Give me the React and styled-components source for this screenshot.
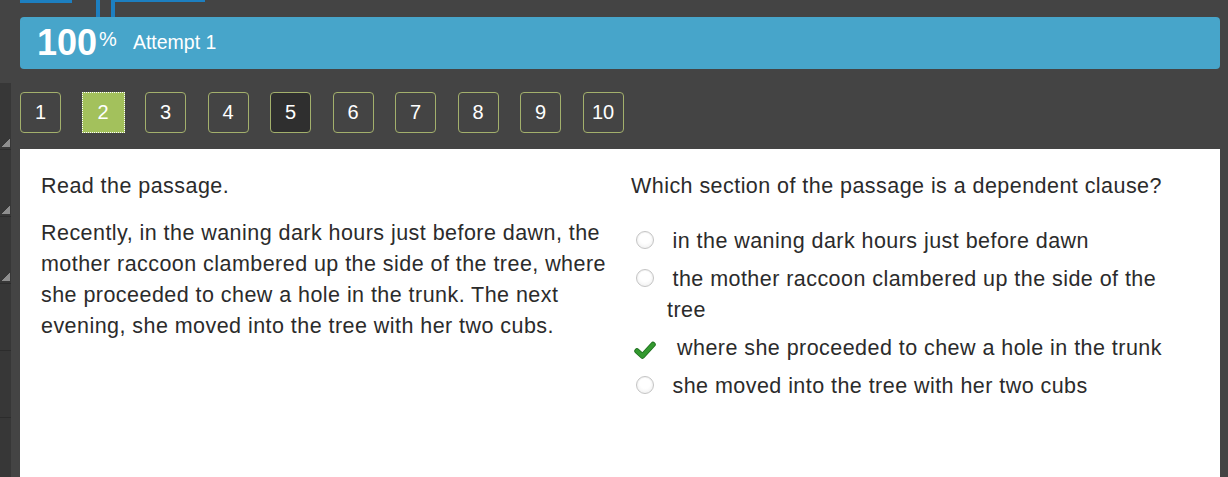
import React from "react";
import styled, { createGlobalStyle } from "styled-components";

const Global = createGlobalStyle`
  html, body { margin: 0; padding: 0; background: #444444; }
  body { font-family: "Liberation Sans", Arial, sans-serif; }
  * { box-sizing: border-box; }
`;

const Page = styled.div`
  min-height: 100vh;
  width: 1228px;
  display: flex;
  flex-direction: column;
  background: #444444;
  overflow: hidden;
`;

const TopStrip = styled.div`
  height: 17px;
  display: flex;
  align-items: flex-start;
`;

const TabPiece = styled.div`
  background: #1d7fc0;
  width: ${(p) => p.$w}px;
  height: ${(p) => p.$h}px;
  margin-left: ${(p) => p.$ml}px;
`;

const Header = styled.div`
  margin: 0 8px 0 20px;
  height: 52px;
  background: #47a5ca;
  border-radius: 4px;
  display: flex;
  align-items: center;
  padding-left: 17px;
  color: #fff;
`;

const Score = styled.div`
  display: inline-flex;
  align-items: flex-start;
`;

const ScoreNum = styled.span`
  font-size: 36px;
  line-height: 36px;
  font-weight: bold;
`;

const Percent = styled.span`
  font-size: 20px;
  line-height: 20px;
  margin-top: 4px;
  margin-left: 2px;
`;

const Attempt = styled.span`
  font-size: 19.5px;
  line-height: 19.5px;
  margin-left: 16px;
`;

const Body = styled.div`
  flex: 1;
  display: flex;
  margin-top: 14px;
`;

const Rail = styled.div`
  width: 11px;
  background: #373737;
  display: flex;
  flex-direction: column;
`;

const RailSegment = styled.div`
  height: 67px;
  flex: none;
  border-bottom: 1px solid #2c2c2c;
  display: flex;
  align-items: flex-end;
  justify-content: flex-end;
  padding: 0 1px 2px 0;
`;

const Grip = styled.div`
  width: 8px;
  height: 8px;
  background: linear-gradient(135deg, transparent 50%, #8e8e8e 50%);
`;

const Main = styled.div`
  flex: 1;
  margin: 0 8px 0 9px;
  display: flex;
  flex-direction: column;
`;

const Nav = styled.div`
  display: flex;
  gap: 21.5px;
  padding: 9px 0 16px;
`;

const NumButton = styled.div`
  width: ${(p) => (p.$active ? 43 : 41)}px;
  height: 41px;
  margin: 0 ${(p) => (p.$active ? -1 : 0)}px;
  border-radius: ${(p) => (p.$active ? 0 : 4)}px;
  border: 1px ${(p) => (p.$active ? "dotted #ffffff" : "solid #a3b06c")};
  background: ${(p) => (p.$active ? "#a3c15c" : p.$dark ? "#2f2f2f" : "#444444")};
  color: #fff;
  font-size: 20px;
  display: flex;
  align-items: center;
  justify-content: center;
`;

const Panel = styled.div`
  flex: 1;
  background: #fff;
  display: grid;
  grid-template-columns: 1fr 1fr;
  column-gap: 21px;
  padding: 22px 20px 0 21px;
  color: #2b2b2b;
  font-size: 21.5px;
  letter-spacing: 0.45px;
  line-height: 31px;
`;

const Column = styled.div`
  min-width: 0;
`;

const Para = styled.p`
  margin: 0 0 ${(p) => p.$mb || 0}px;
`;

const Options = styled.div`
  margin-top: 24px;
  display: flex;
  flex-direction: column;
  gap: 7px;
`;

const Option = styled.div`
  display: flex;
`;

const Marker = styled.div`
  width: 36px;
  flex: none;
  padding-left: ${(p) => (p.$check ? 3 : 5)}px;
  padding-top: ${(p) => (p.$check ? 8 : 4.5)}px;
  line-height: 0;
  svg { display: block; }
`;

const Radio = styled.div`
  width: 18px;
  height: 18px;
  border-radius: 50%;
  border: 1px solid #c4c4c4;
  background: radial-gradient(circle at 50% 40%, #ffffff 40%, #ececec 100%);
  box-shadow: inset 0 0 0 1px #f4f4f4;
`;

const OptionText = styled.div`
  text-indent: ${(p) => (p.$check ? 10 : 5.5)}px;
`;

const Check = () => (
  <svg width="22" height="18" viewBox="0 0 22 18">
    <path
      d="M3 10 L8.5 15 L19 3.5"
      fill="none"
      stroke="#1f6f1f"
      strokeWidth="5.5"
      strokeLinecap="round"
      strokeLinejoin="round"
    />
    <path
      d="M3 10 L8.5 15 L19 3.5"
      fill="none"
      stroke="#33992f"
      strokeWidth="3.8"
      strokeLinecap="round"
      strokeLinejoin="round"
    />
  </svg>
);

const numbers = [1, 2, 3, 4, 5, 6, 7, 8, 9, 10];

const options = [
  { text: "in the waning dark hours just before dawn" },
  { text: "the mother raccoon clambered up the side of the tree" },
  { text: "where she proceeded to chew a hole in the trunk", check: true },
  { text: "she moved into the tree with her two cubs" },
];

export default function App() {
  return (
    <>
      <Global />
      <Page>
        <TopStrip>
          <TabPiece $ml={20} $w={52} $h={3} />
          <TabPiece $ml={24} $w={4} $h={17} />
          <TabPiece $ml={11} $w={4} $h={17} />
          <TabPiece $ml={0} $w={90} $h={2} />
        </TopStrip>
        <Header>
          <Score>
            <ScoreNum>100</ScoreNum>
            <Percent>%</Percent>
          </Score>
          <Attempt>Attempt 1</Attempt>
        </Header>
        <Body>
          <Rail>
            {[0, 1, 2, 3, 4, 5].map((i) => (
              <RailSegment key={i}>{i < 3 && <Grip />}</RailSegment>
            ))}
          </Rail>
          <Main>
            <Nav>
              {numbers.map((n) => (
                <NumButton key={n} $active={n === 2} $dark={n === 5}>
                  {n}
                </NumButton>
              ))}
            </Nav>
            <Panel>
              <Column>
                <Para $mb={16}>Read the passage.</Para>
                <Para>
                  Recently, in the waning dark hours just before dawn, the mother
                  raccoon clambered up the side of the tree, where she proceeded
                  to chew a hole in the trunk. The next evening, she moved into
                  the tree with her two cubs.
                </Para>
              </Column>
              <Column>
                <Para>Which section of the passage is a dependent clause?</Para>
                <Options>
                  {options.map((o) => (
                    <Option key={o.text}>
                      <Marker $check={o.check}>
                        {o.check ? <Check /> : <Radio />}
                      </Marker>
                      <OptionText $check={o.check}>{o.text}</OptionText>
                    </Option>
                  ))}
                </Options>
              </Column>
            </Panel>
          </Main>
        </Body>
      </Page>
    </>
  );
}
